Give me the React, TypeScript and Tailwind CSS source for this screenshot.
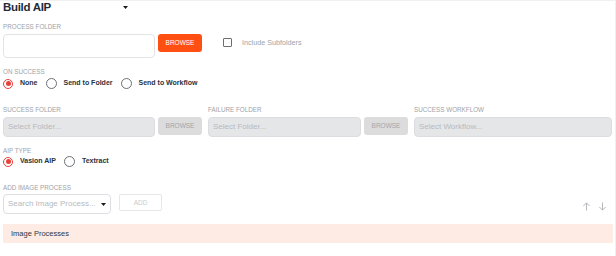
import React from 'react';

const font = { fontFamily: '"Liberation Sans", Arial, sans-serif' };

const Label: React.FC<{ children: React.ReactNode; className?: string }> = ({ children, className = '' }) => (
  <div className={`text-[6.3px] leading-[8px] uppercase text-[#9ea3a8] ${className}`}>{children}</div>
);

const Radio: React.FC<{ label: string; checked?: boolean }> = ({ label, checked }) => (
  <div className="flex items-center gap-[7px]">
    {checked ? (
      <span className="w-[10px] h-[10px] rounded-full border-[1.5px] border-[#e8403a] flex items-center justify-center">
        <span className="w-[5px] h-[5px] rounded-full bg-[#e8403a]" />
      </span>
    ) : (
      <span className="w-[11px] h-[11px] rounded-full border-[1.3px] border-[#6b6f75]" />
    )}
    <span className="text-[7px] font-bold text-[#2a323c]">{label}</span>
  </div>
);

const Caret: React.FC = () => (
  <svg width="5" height="3" viewBox="0 0 5 3">
    <path d="M0 0h5L2.5 3z" fill="#1a1a1a" />
  </svg>
);

const FolderField: React.FC<{ placeholder: string; browse?: boolean; width: string }> = ({ placeholder, browse, width }) => (
  <div className={`flex items-start gap-[3px] ${width}`}>
    <div className="flex-1 h-[20px] rounded-[4px] bg-[#e5e6e8] border border-[#dcdde0] flex items-center px-[4px] text-[8px] text-[#b7babe]">
      {placeholder}
    </div>
    {browse && (
      <div className="w-[44px] h-[18px] rounded-[3px] bg-[#dcdcdd] flex items-center justify-center text-[6.5px] text-[#a3a6aa]">
        BROWSE
      </div>
    )}
  </div>
);

export default function App() {
  return (
    <div style={font} className="w-[616px] h-[256px] bg-white border-t border-r border-[#f0f0f0] pl-[3px] overflow-hidden">
      <div className="flex items-center w-[125px] justify-between h-[13px]">
        <span className="text-[11.5px] leading-[13px] font-bold tracking-[-0.3px] text-[#1f2b3a]">Build AIP</span>
        <Caret />
      </div>

      <Label className="mt-[9px]">Process Folder</Label>
      <div className="flex items-start mt-[3px]">
        <div className="w-[152px] h-[24px] rounded-[4px] bg-white border border-[#e1e3e6]" />
        <div className="ml-[3px] w-[44px] h-[18px] rounded-[3px] bg-[#ff4f12] flex items-center justify-center text-[6.5px] text-white">
          BROWSE
        </div>
        <div className="ml-[21px] mt-[4px] w-[9px] h-[9px] border-[1.3px] border-[#6b6f75] rounded-[1px]" />
        <span className="ml-[10px] mt-[4px] text-[7.2px] leading-[9px] text-[#9ea3a8]">Include Subfolders</span>
      </div>

      <Label className="mt-[10px]">On Success</Label>
      <div className="flex items-center gap-[8px] mt-[2px] h-[11px]">
        <Radio label="None" checked />
        <Radio label="Send to Folder" />
        <Radio label="Send to Workflow" />
      </div>

      <div className="flex gap-[6px] mt-[17px]">
        <div>
          <Label>Success Folder</Label>
          <div className="mt-[3px]">
            <FolderField placeholder="Select Folder..." browse width="w-[199px]" />
          </div>
        </div>
        <div>
          <Label>Failure Folder</Label>
          <div className="mt-[3px]">
            <FolderField placeholder="Select Folder..." browse width="w-[200px]" />
          </div>
        </div>
        <div>
          <Label>Success Workflow</Label>
          <div className="mt-[3px]">
            <FolderField placeholder="Select Workflow..." width="w-[198px]" />
          </div>
        </div>
      </div>

      <Label className="mt-[10px]">AIP Type</Label>
      <div className="flex items-center gap-[8px] mt-[1px] h-[11px]">
        <Radio label="Vasion AIP" checked />
        <Radio label="Textract" />
      </div>

      <Label className="mt-[17px]">Add Image Process</Label>
      <div className="flex items-start mt-[2px] pr-[8px]">
        <div className="w-[108px] h-[20px] rounded-[4px] bg-white border border-[#dcdee1] flex items-center justify-between px-[4px] text-[8px] text-[#b7babe]">
          <span>Search Image Process...</span>
          <Caret />
        </div>
        <div className="ml-[8px] w-[43px] h-[17px] rounded-[2px] border border-[#e6e7e9] flex items-center justify-center text-[6.5px] text-[#c9cbce]">
          ADD
        </div>
        <div className="ml-auto mt-[8px] flex gap-[7px] text-[#b3b6ba]">
          <svg width="9" height="9" viewBox="0 0 10 10" fill="none" stroke="currentColor" strokeWidth="1.1">
            <path d="M5 9.5V1M1.5 4.5 5 1l3.5 3.5" />
          </svg>
          <svg width="9" height="9" viewBox="0 0 10 10" fill="none" stroke="currentColor" strokeWidth="1.1">
            <path d="M5 0.5V9M1.5 5.5 5 9l3.5-3.5" />
          </svg>
        </div>
      </div>

      <div className="mt-[10px] mr-[2px] h-[19px] bg-[#fdebe4] flex items-center pl-[8px] text-[7.5px] text-[#2f3740]">
        Image Processes
      </div>
    </div>
  );
}
